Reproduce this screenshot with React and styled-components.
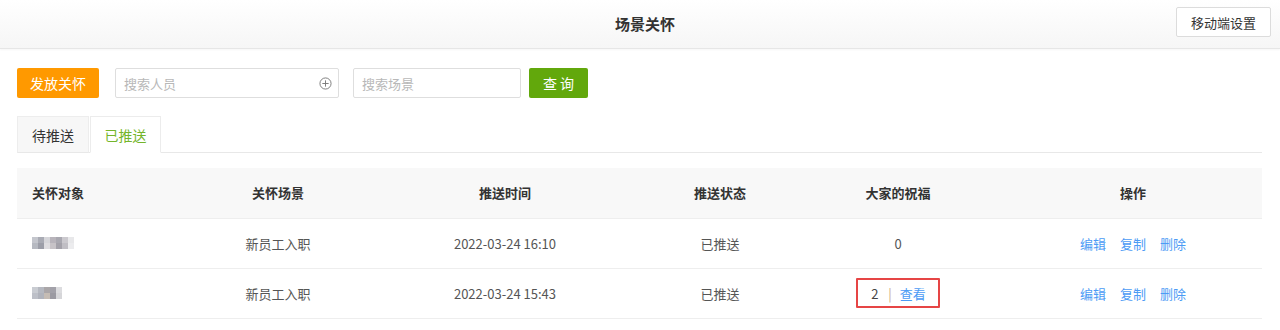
import React from 'react'
import styled, { createGlobalStyle } from 'styled-components'

const GlobalStyle = createGlobalStyle`
  html, body {
    margin: 0;
    padding: 0;
    background: #fff;
    font-family: "Noto Sans CJK SC", "Noto Sans", sans-serif;
    color: #333;
  }
  * { box-sizing: border-box; }
`

const Header = styled.header`
  height: 49px;
  position: relative;
  display: flex;
  align-items: center;
  justify-content: center;
  background: linear-gradient(180deg, #ffffff 0%, #f6f6f6 100%);
  border-bottom: 1px solid #e6e6e6;
  box-shadow: 0 1px 2px rgba(0, 0, 0, 0.04);
`

const Title = styled.h1`
  margin: 0;
  font-size: 15px;
  font-weight: 700;
  line-height: 20px;
  color: #333;
  padding-left: 10px;
`

const MobileButton = styled.button`
  position: absolute;
  right: 9px;
  top: 7px;
  height: 30px;
  width: 95px;
  background: #fff;
  border: 1px solid #dcdcdc;
  border-radius: 2px;
  font-family: inherit;
  font-size: 13px;
  color: #333;
  padding: 0;
`

const Body = styled.main`
  padding: 19px 18px 0 17px;
`

const Toolbar = styled.div`
  display: flex;
  align-items: center;
  height: 30px;
`

const Button = styled.button`
  height: 30px;
  width: ${p => p.$w}px;
  margin-right: ${p => p.$mr || 0}px;
  border: none;
  border-radius: 2px;
  background: ${p => p.$bg};
  color: #fff;
  font-family: inherit;
  font-size: 14px;
  padding: 0;
  white-space: pre;
`

const InputBox = styled.div`
  position: relative;
  display: flex;
  align-items: center;
  width: ${p => p.$w}px;
  height: 30px;
  margin-right: ${p => p.$mr}px;
  border: 1px solid #dedede;
  border-radius: 2px;
  padding: 0 8px;
  font-size: 13px;
  color: #b8b8b8;
`

const PlusIcon = styled.svg`
  position: absolute;
  right: 6px;
  top: 8px;
`

const Tabs = styled.div`
  display: flex;
  margin-top: 18px;
  border-bottom: 1px solid #e8e8e8;
  height: 37px;
`

const Tab = styled.div`
  width: ${p => p.$w}px;
  height: 37px;
  margin-right: 1px;
  display: flex;
  align-items: center;
  justify-content: center;
  font-size: 14px;
  border: 1px solid ${p => (p.$active ? '#ececec' : '#ededed')};
  border-bottom: ${p => (p.$active ? '1px solid #fff' : '1px solid #e8e8e8')};
  background: ${p => (p.$active ? '#fff' : '#f7f7f7')};
  color: ${p => (p.$active ? '#74b52b' : '#333')};
`

const Table = styled.table`
  margin-top: 15px;
  width: 100%;
  border-collapse: collapse;
  table-layout: fixed;
  font-size: 13px;
`

const Col = styled.col`
  width: ${p => (p.$w ? `${p.$w}px` : 'auto')};
`

const Th = styled.th`
  height: 50px;
  background: #f8f8f8;
  font-weight: 700;
  color: #333;
  text-align: ${p => (p.$left ? 'left' : 'center')};
  padding: 0 0 0 ${p => (p.$left ? 15 : 0)}px;
  border-bottom: 1px solid #eeeeee;
`

const Td = styled.td`
  height: 50px;
  color: #555;
  text-align: ${p => (p.$left ? 'left' : 'center')};
  padding: 0 0 0 ${p => (p.$left ? 15 : 0)}px;
  border-bottom: 1px solid #eeeeee;
`

const Mosaic = styled.div`
  display: grid;
  grid-template-columns: repeat(${p => p.$cols}, 6px);
  grid-auto-rows: 6px;
  filter: blur(0.6px);
`

const Cell = styled.span`
  background: ${p => p.$c};
`

const Highlight = styled.span`
  display: inline-flex;
  align-items: center;
  height: 30px;
  padding: 0 12px 0 13px;
  border: 2px solid #e64545;
  border-radius: 1px;
  color: #444;
`

const Sep = styled.span`
  margin: 0 8px 0 10px;
  color: #c9a888;
`

const Link = styled.a`
  color: #4c9bf5;
  cursor: pointer;
  & + & {
    margin-left: 14px;
  }
`

const mosaic1 = [
  ['#c4c6cd', '#a9abb4', '#d6d6da', '#b8b4bb', '#a9a8b0', '#cbc9ce', '#e8e8ea'],
  ['#b6b9c1', '#9c9ea8', '#dedde0', '#c7c3c7', '#a3a1a9', '#c0bec4', '#ececee'],
]
const mosaic2 = [
  ['#c9ccd2', '#b5b8c0', '#aaa6a8', '#a2a1a9', '#dcdcdf'],
  ['#bdc0c8', '#b0b3bc', '#c5bcb4', '#9b9aa2', '#d6d6d9'],
]

const Blurred = ({ data }) => (
  <Mosaic $cols={data[0].length}>
    {data.flat().map((c, i) => <Cell key={i} $c={c} />)}
  </Mosaic>
)

const rows = [
  { name: mosaic1, scene: '新员工入职', time: '2022-03-24 16:10', status: '已推送', wishes: '0' },
  { name: mosaic2, scene: '新员工入职', time: '2022-03-24 15:43', status: '已推送', wishes: '2', view: true },
]

const App = () => {
  return (
    <>
      <GlobalStyle />
      <Header>
        <Title>场景关怀</Title>
        <MobileButton>移动端设置</MobileButton>
      </Header>
      <Body>
        <Toolbar>
          <Button $w={82} $mr={16} $bg="#ff9900">发放关怀</Button>
          <InputBox $w={224} $mr={14}>
            搜索人员
            <PlusIcon width="13" height="13" viewBox="0 0 14 14">
              <circle cx="7" cy="7" r="6" fill="none" stroke="#777" strokeWidth="1" />
              <path d="M7 3.6v6.8M3.6 7h6.8" stroke="#777" strokeWidth="1" />
            </PlusIcon>
          </InputBox>
          <InputBox $w={168} $mr={8}>搜索场景</InputBox>
          <Button $w={59} $bg="#62a80c">查 询</Button>
        </Toolbar>
        <Tabs>
          <Tab $w={72}>待推送</Tab>
          <Tab $w={71} $active>已推送</Tab>
        </Tabs>
        <Table>
          <colgroup>
            <Col $w={177} />
            <Col $w={168} />
            <Col $w={286} />
            <Col $w={144} />
            <Col $w={212} />
            <Col />
          </colgroup>
          <thead>
            <tr>
              <Th $left>关怀对象</Th>
              <Th>关怀场景</Th>
              <Th>推送时间</Th>
              <Th>推送状态</Th>
              <Th>大家的祝福</Th>
              <Th>操作</Th>
            </tr>
          </thead>
          <tbody>
            {rows.map((r, i) => (
              <tr key={i}>
                <Td $left><Blurred data={r.name} /></Td>
                <Td>{r.scene}</Td>
                <Td>{r.time}</Td>
                <Td>{r.status}</Td>
                <Td>
                  {r.view ? (
                    <Highlight>
                      {r.wishes}
                      <Sep>|</Sep>
                      <Link>查看</Link>
                    </Highlight>
                  ) : r.wishes}
                </Td>
                <Td>
                  <Link>编辑</Link>
                  <Link>复制</Link>
                  <Link>删除</Link>
                </Td>
              </tr>
            ))}
          </tbody>
        </Table>
      </Body>
    </>
  )
}

export default App
